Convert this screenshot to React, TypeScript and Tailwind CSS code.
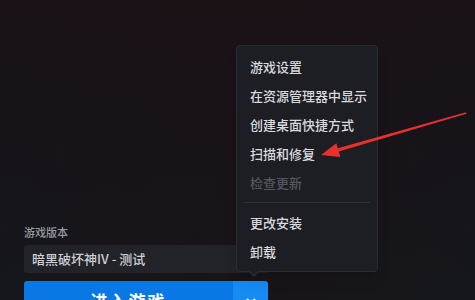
import React from "react";

const items: { label: string; disabled?: boolean; sep?: boolean }[] = [
  { label: "游戏设置" },
  { label: "在资源管理器中显示" },
  { label: "创建桌面快捷方式" },
  { label: "扫描和修复" },
  { label: "检查更新", disabled: true },
  { label: "", sep: true },
  { label: "更改安装" },
  { label: "卸载" },
];

export default function App() {
  return (
    <div
      className="relative w-[475px] h-[300px] overflow-hidden bg-gradient-to-b from-[#1a1216] via-[#16141a] to-[#15171c]"
      style={{ fontFamily: '"Noto Sans CJK SC", "Noto Sans", sans-serif' }}
    >
      <div className="absolute inset-0 bg-gradient-to-r from-transparent via-[#1c1116]/40 to-transparent" />
      <div className="relative flex flex-col pl-6 pt-[224px]">
        <div className="text-[11px] font-medium leading-[16px] text-[#9a9ba0]">游戏版本</div>
        <div className="mt-[5px] flex h-[28px] w-[244px] items-center rounded-[3px] bg-[#212329] px-2 text-[13px] font-medium text-[#cfd0d3]">
          暗黑破坏神IV - 测试
        </div>
        <div className="mt-2 flex h-[40px] w-[244px] overflow-hidden rounded-[3px]">
          <div className="flex flex-1 items-center justify-center bg-[#0a78e4] text-[17px] font-bold tracking-[2px] text-white">
            进入游戏
          </div>
          <div className="flex w-[35px] items-center justify-center bg-[#168bf2] text-white">
            <svg width="12" height="12" viewBox="0 0 12 12" fill="none" stroke="white" strokeWidth="2">
              <path d="M2 4l4 4 4-4" />
            </svg>
          </div>
        </div>
      </div>

      <div className="absolute left-[236px] top-[45px] w-[142px] h-[227px] rounded-[4px] border border-[#2a2c33] bg-[#1c1e24] pt-[6px] shadow-lg">
        {items.map((it, i) =>
          it.sep ? (
            <div key={i} className="flex h-[11px] items-center px-[7px]">
              <div className="h-px w-full bg-[#2f3138]" />
            </div>
          ) : (
            <div
              key={i}
              className={
                "flex h-[29px] items-center pl-[13px] text-[13px] font-medium " +
                (it.disabled ? "text-[#55575d]" : "text-[#d9dadc]")
              }
            >
              {it.label}
            </div>
          )
        )}
        <div className="absolute left-[11px] top-full h-0 w-0 border-x-[6px] border-t-[6px] border-x-transparent border-t-[#2a2c33]" />
        <div className="absolute left-[12px] top-[calc(100%-1px)] h-0 w-0 border-x-[5px] border-t-[5px] border-x-transparent border-t-[#1c1e24]" />
      </div>

      <svg className="absolute left-0 top-0" width="475" height="300" viewBox="0 0 475 300">
        <polygon
          points="321,155 336.3,143.2 337.8,148.3 466,112.3 466.4,113.7 338.8,151.6 340.3,157"
          fill="#e8312f"
        />
      </svg>
    </div>
  );
}
